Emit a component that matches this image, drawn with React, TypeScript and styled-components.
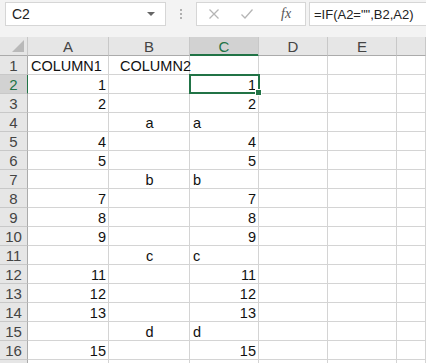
import React from 'react';
import styled, { createGlobalStyle } from 'styled-components';

const Global = createGlobalStyle`
  html, body { margin: 0; padding: 0; background: #fff; }
  body { font-family: "Liberation Sans", Arial, sans-serif; }
`;

const GREEN = '#217346';
const GRID = '#d4d4d4';

const Page = styled.div`
  width: 426px;
  height: 363px;
  overflow: hidden;
  background: #fff;
`;

const Toolbar = styled.div`
  height: 37px;
  background: #f3f3f3;
  display: flex;
  align-items: flex-start;
  padding: 2px 0 0 5px;
  box-sizing: border-box;
`;

const NameBox = styled.div`
  width: 161px;
  height: 24px;
  box-sizing: border-box;
  background: #fff;
  border: 1px solid #d6d6d6;
  display: flex;
  align-items: center;
  justify-content: space-between;
  padding: 0 10px 0 6px;
  font-size: 14px;
  color: #222;
`;

const Caret = styled.span`
  width: 0;
  height: 0;
  border-left: 4px solid transparent;
  border-right: 4px solid transparent;
  border-top: 4px solid #666;
`;

const Dots = styled.div`
  width: 30px;
  height: 24px;
  display: flex;
  flex-direction: column;
  align-items: center;
  justify-content: center;
  gap: 2px;
  span {
    width: 2px;
    height: 2px;
    background: #b0b0b0;
  }
`;

const FxBox = styled.div`
  width: 110px;
  height: 24px;
  box-sizing: border-box;
  background: #fff;
  border: 1px solid #d6d6d6;
  display: flex;
  align-items: center;
  padding-left: 11px;
  gap: 20px;
`;

const Fx = styled.span`
  font-family: "Liberation Serif", "Times New Roman", serif;
  font-style: italic;
  font-size: 14px;
  color: #555;
  margin-left: 7px;
`;

const FormulaBox = styled.div`
  flex: 1;
  height: 24px;
  margin-left: 3px;
  box-sizing: border-box;
  background: #fff;
  border: 1px solid #d6d6d6;
  border-right: none;
  display: flex;
  align-items: center;
  padding-left: 4px;
  font-size: 13px;
  color: #222;
  white-space: nowrap;
`;

const SheetWrap = styled.div`
  position: relative;
`;

const Grid = styled.div`
  display: grid;
  grid-template-columns: 28px 81px 81px 69px 69px 69px 1fr;
  grid-auto-rows: 19px;
  grid-template-rows: 19px;
`;

const HeadCell = styled.div<{ $sel?: boolean }>`
  background: ${(p) => (p.$sel ? '#d2d2d2' : '#e6e6e6')};
  color: ${(p) => (p.$sel ? GREEN : '#444')};
  border-right: 1px solid #c8c8c8;
  border-bottom: 1px solid ${(p) => (p.$sel ? GREEN : '#ababab')};
  box-shadow: ${(p) => (p.$sel ? `inset 0 -1px 0 ${GREEN}` : 'none')};
  font-size: 15px;
  display: flex;
  align-items: center;
  justify-content: center;
  position: relative;
`;

const Corner = styled(HeadCell)`
  &::after {
    content: '';
    position: absolute;
    right: 3px;
    bottom: 3px;
    width: 0;
    height: 0;
    border-left: 12px solid transparent;
    border-bottom: 12px solid #b9b9b9;
  }
`;

const RowHead = styled.div<{ $sel?: boolean }>`
  background: ${(p) => (p.$sel ? '#d2d2d2' : '#e6e6e6')};
  color: ${(p) => (p.$sel ? GREEN : '#444')};
  border-right: 1px solid ${(p) => (p.$sel ? GREEN : '#ababab')};
  border-bottom: 1px solid #c8c8c8;
  font-size: 15px;
  display: flex;
  align-items: center;
  justify-content: center;
`;

const Cell = styled.div<{ $align: 'left' | 'right' | 'center' }>`
  border-right: 1px solid ${GRID};
  border-bottom: 1px solid ${GRID};
  font-size: 14.5px;
  color: #111;
  display: flex;
  align-items: center;
  justify-content: ${(p) =>
    p.$align === 'left' ? 'flex-start' : p.$align === 'right' ? 'flex-end' : 'center'};
  padding: 1px 2px 0 3px;
  white-space: pre;
  overflow: visible;
`;

const Selection = styled.div`
  position: absolute;
  left: 189px;
  top: 37px;
  width: 71px;
  height: 20px;
  box-sizing: border-box;
  border: 2px solid ${GREEN};
  pointer-events: none;
  &::after {
    content: '';
    position: absolute;
    right: -4px;
    bottom: -4px;
    width: 5px;
    height: 5px;
    background: ${GREEN};
    border: 1px solid #fff;
  }
`;

const cols = ['A', 'B', 'C', 'D', 'E', ''];

const rows: string[][] = [
  ['COLUMN1', '  COLUMN2', ''],
  ['1', '', '1'],
  ['2', '', '2'],
  ['', 'a', 'a'],
  ['4', '', '4'],
  ['5', '', '5'],
  ['', 'b', 'b'],
  ['7', '', '7'],
  ['8', '', '8'],
  ['9', '', '9'],
  ['', 'c', 'c'],
  ['11', '', '11'],
  ['12', '', '12'],
  ['13', '', '13'],
  ['', 'd', 'd'],
  ['15', '', '15'],
  ['', '', ''],
];

function alignFor(v: string, col: number): 'left' | 'right' | 'center' {
  if (v === '') return 'left';
  if (/^\d+$/.test(v)) return 'right';
  if (col === 1 && v.length === 1) return 'center';
  return 'left';
}

function XIcon() {
  return (
    <svg width="12" height="12" viewBox="0 0 12 12">
      <path d="M1.5 1.5 L10.5 10.5 M10.5 1.5 L1.5 10.5" stroke="#b5b5b5" strokeWidth="1.3" fill="none" />
    </svg>
  );
}

function CheckIcon() {
  return (
    <svg width="14" height="12" viewBox="0 0 14 12">
      <path d="M1.5 6.5 L5 10 L12.5 1.5" stroke="#b5b5b5" strokeWidth="1.3" fill="none" />
    </svg>
  );
}

export default function App() {
  return (
    <Page>
      <Global />
      <Toolbar>
        <NameBox>
          <span>C2</span>
          <Caret />
        </NameBox>
        <Dots>
          <span />
          <span />
          <span />
        </Dots>
        <FxBox>
          <XIcon />
          <CheckIcon />
          <Fx>fx</Fx>
        </FxBox>
        <FormulaBox>=IF(A2="",B2,A2)</FormulaBox>
      </Toolbar>
      <SheetWrap>
        <Grid>
          <Corner />
          {cols.map((c, i) => (
            <HeadCell key={i} $sel={c === 'C'}>
              {c}
            </HeadCell>
          ))}
          {rows.map((r, ri) => (
            <React.Fragment key={ri}>
              <RowHead $sel={ri === 1}>{ri < 16 ? ri + 1 : ''}</RowHead>
              {[0, 1, 2, 3, 4, 5].map((ci) => {
                const v = r[ci] ?? '';
                return (
                  <Cell key={ci} $align={alignFor(v, ci)}>
                    {v}
                  </Cell>
                );
              })}
            </React.Fragment>
          ))}
        </Grid>
        <Selection />
      </SheetWrap>
    </Page>
  );
}
